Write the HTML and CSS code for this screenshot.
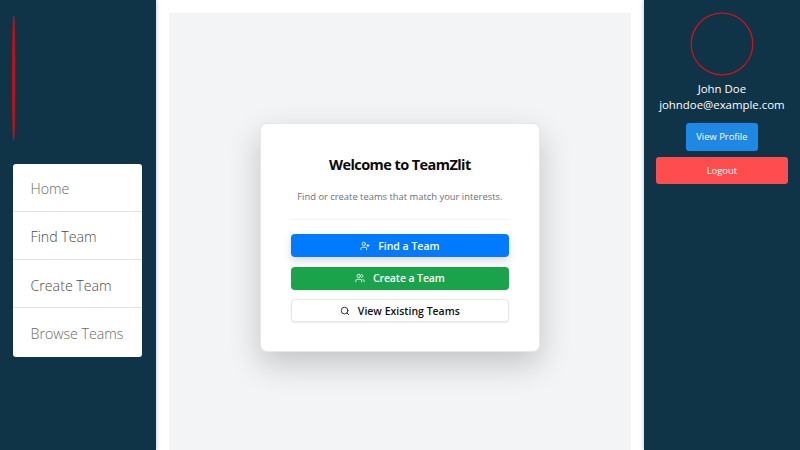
FILE: index.html
```html
<!DOCTYPE html>
<html lang="en">
<head>
<meta charset="utf-8">
<title>TeamZlit</title>
<link rel="stylesheet" href="styles.css">
</head>
<body>
<div class="layout">
  <aside class="sidebar">
    <svg class="logo" viewBox="0 0 4 126"><ellipse cx="1.700" cy="63" rx="1.200" ry="62"/></svg>
    <nav class="menu">
      <a class="soft">Home</a>
      <a>Find Team</a>
      <a>Create Team</a>
      <a class="soft">Browse Teams</a>
    </nav>
  </aside>
  <main class="content">
    <section class="card">
      <h1>Welcome to TeamZlit</h1>
      <p>Find or create teams that match your interests.</p>
      <hr>
      <div class="actions">
        <button class="btn find"><svg viewBox="0 0 24 24"><path d="M16 21v-2a4 4 0 0 0-4-4H6a4 4 0 0 0-4 4v2"/><circle cx="9" cy="7" r="4"/><path d="M19 8v6M22 11h-6"/></svg><span>Find a Team</span></button>
        <button class="btn create"><svg viewBox="0 0 24 24"><path d="M16 21v-2a4 4 0 0 0-4-4H6a4 4 0 0 0-4 4v2"/><circle cx="9" cy="7" r="4"/><path d="M22 21v-2a4 4 0 0 0-3-3.870M16 3.130a4 4 0 0 1 0 7.750"/></svg><span>Create a Team</span></button>
        <button class="btn view"><svg viewBox="0 0 24 24"><circle cx="11" cy="11" r="8"/><path d="m21 21-4.300-4.300"/></svg><span>View Existing Teams</span></button>
      </div>
    </section>
  </main>
  <aside class="profile">
    <svg class="avatar" viewBox="0 0 64 64"><circle cx="32" cy="32" r="30.800"/></svg>
    <div class="name">John Doe</div>
    <div class="email">johndoe@example.com</div>
    <button class="small-btn profile-btn">View Profile</button>
    <button class="small-btn logout">Logout</button>
  </aside>
</div>
</body>
</html>
```
FILE: styles.css
```css
* { box-sizing: border-box; }
body { margin: 0; font-family: "Open Sans", "Noto Sans", sans-serif; background: #fff; overflow: hidden; }
button { border: 0; margin: 0; padding: 0; font-family: inherit; white-space: nowrap; }
.layout { display: grid; grid-template-columns: 156px 1fr 156.300px; height: 450px; }
.sidebar, .profile { background: #103447; box-shadow: 0 0 4px rgba(0, 20, 40, .3); }
.sidebar { padding: 15px 14px 0 12px; }
.logo { display: block; width: 4px; height: 126px; }
.logo ellipse { fill: #b5161c; stroke: #cf0d12; stroke-width: .8; }
.menu { margin: 22.500px 0 0 .5px; height: 193px; display: grid; grid-template-rows: repeat(4, 1fr); background: #fff; border-radius: 3px; overflow: hidden; }
.menu a { display: flex; align-items: center; padding: 3px 0 0 18px; font-size: 14.200px; font-weight: 300; color: #4c4c4c; white-space: nowrap; border-bottom: 1px solid #dfe1e4; }
.menu a.soft { color: #686868; }
.menu a:last-child { border-bottom: 0; padding-top: 2px; }
.content { margin: 12.500px 12.500px 0; background: #f3f4f6; display: flex; justify-content: center; align-items: flex-start; }
.card { width: 280px; height: 229px; margin-top: 110.500px; padding: 31px 30px 0; background: #fff; border: 1px solid #e5e7eb; border-radius: 7px; box-shadow: 0 12px 32px rgba(0, 0, 0, .2); text-align: center; }
h1 { margin: 0; font-size: 14.500px; line-height: 20px; font-weight: 700; letter-spacing: -.58px; color: #0a0a0a; white-space: nowrap; }
p { margin: 13px 0 0; font-size: 9.400px; line-height: 18px; color: #68707c; white-space: nowrap; }
hr { margin: 13px 0 14px; border: 0; border-top: 1px solid #f0f1f3; }
.actions { display: grid; gap: 9.500px; }
.btn { height: 23px; border-radius: 4px; display: flex; align-items: center; justify-content: center; gap: 8px; font-size: 10.500px; font-weight: 600; color: #fff; }
.btn svg { width: 10px; height: 10px; fill: none; stroke: currentColor; stroke-width: 2; stroke-linecap: round; stroke-linejoin: round; }
.find { background: #007bff; box-shadow: 0 4px 8px rgba(0, 0, 0, .15); }
.create { background: #1aa34a; box-shadow: 0 1px 2px rgba(0, 0, 0, .08); }
.create span { letter-spacing: -.1px; }
.view { background: #fff; color: #111; border: 1px solid #e5e7eb; box-shadow: 0 1px 2px rgba(0, 0, 0, .08); }
.profile { display: flex; flex-direction: column; align-items: center; padding: 11.500px 12.500px 0; color: #fff; font-size: 11.400px; line-height: 16px; }
.avatar { display: block; width: 64px; height: 64px; fill: none; stroke: #d01018; stroke-width: 1.300; }
.name { margin-top: 5.500px; }
.small-btn { color: #fff; font-size: 9.400px; border-radius: 3px; height: 27.500px; }
.profile-btn { width: 71.500px; margin-top: 10px; background: #1e88e5; }
.logout { width: 100%; margin-top: 6px; background: #ff4d4f; }
```
